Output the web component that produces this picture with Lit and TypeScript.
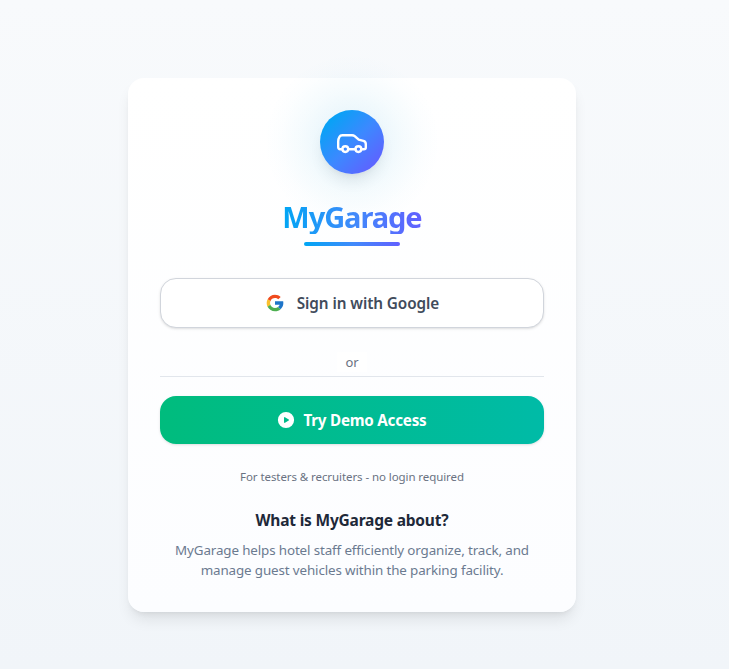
import { LitElement, html, css } from "lit";
import { customElement } from "lit/decorators.js";

@customElement("app-root")
export class AppRoot extends LitElement {
  static styles = css`
    :host {
      display: block;
      height: 669px;
      box-sizing: border-box;
      padding: 78px 0 0 128px;
      overflow: hidden;
      background: linear-gradient(to bottom, #f8fafc, #f1f5f9);
      font-family: "Noto Sans", "Open Sans", sans-serif;
      color: #1e2939;
    }
    * { box-sizing: border-box; }
    .card {
      width: 448px;
      height: 534px;
      padding: 32px;
      display: flex;
      flex-direction: column;
      align-items: center;
      border-radius: 16px;
      background: linear-gradient(to bottom, #ffffff, #fcfdff);
      box-shadow: 0 10px 15px -3px rgba(0, 0, 0, 0.09), 0 4px 6px -4px rgba(0, 0, 0, 0.1);
      text-align: center;
      white-space: nowrap;
    }
    .badge {
      position: relative;
      width: 64px;
      height: 64px;
      flex: none;
    }
    .glow {
      position: absolute;
      inset: -56px;
      border-radius: 50%;
      background: radial-gradient(circle closest-side, rgba(0, 150, 215, 0.075) 35%, rgba(0, 160, 215, 0.038) 58%, rgba(0, 166, 225, 0.011) 82%, transparent);
    }
    .disc {
      position: relative;
      width: 64px;
      height: 64px;
      display: flex;
      align-items: center;
      justify-content: center;
      border-radius: 50%;
      background: linear-gradient(135deg, #00a6f4 10%, #3d88ff 52%, #615fff 90%);
      box-shadow: 0 10px 15px -3px rgba(0, 0, 0, 0.08), 0 4px 6px -4px rgba(0, 0, 0, 0.08);
    }
    svg { display: block; flex: none; }
    .title {
      margin: 28px 0 0;
      height: 32px;
      font-size: 29px;
      line-height: 30px;
      font-weight: 700;
      letter-spacing: -1.05px;
      color: transparent;
      background: linear-gradient(to right, #00a6f4, #4189fb 52%, #615fff);
      background-clip: text;
      -webkit-background-clip: text;
    }
    .bar {
      width: 96px;
      height: 4px;
      margin-top: 8px;
      flex: none;
      border-radius: 2px;
      background: linear-gradient(to right, #00a6f4, #4189fb 52%, #615fff);
    }
    .btn {
      width: 384px;
      display: flex;
      align-items: center;
      justify-content: center;
      flex: none;
      border-radius: 16px;
      line-height: 24px;
    }
    .google {
      height: 50px;
      margin-top: 32px;
      gap: 12px;
      border: 1px solid #d1d5dc;
      background: #ffffff;
      box-shadow: 0 1px 3px rgba(0, 0, 0, 0.1), 0 1px 2px -1px rgba(0, 0, 0, 0.1);
      color: #414b5b;
      font-size: 15.3px;
      font-weight: 600;
      letter-spacing: -0.08px;
    }
    .divider {
      width: 384px;
      height: 49px;
      display: flex;
      justify-content: center;
      align-items: flex-end;
      flex: none;
      padding-bottom: 4px;
      border-bottom: 1px solid #e2e6ec;
    }
    .or {
      padding: 0 8px;
      font-size: 13px;
      line-height: 20px;
      color: #6a7282;
      background: #ffffff;
    }
    .demo {
      height: 48px;
      margin-top: 19px;
      gap: 8px;
      color: #ffffff;
      font-size: 15.2px;
      font-weight: 700;
      letter-spacing: -0.22px;
      background: linear-gradient(to right, #00bc7d, #00bba7);
      box-shadow: 0 1px 3px rgba(0, 0, 0, 0.1), 0 1px 2px -1px rgba(0, 0, 0, 0.1);
    }
    .note {
      margin: 25px 0 0;
      font-size: 11.5px;
      line-height: 16px;
      letter-spacing: -0.08px;
      color: #6a7282;
    }
    .heading {
      margin: 23px 0 0;
      font-size: 15.5px;
      line-height: 24px;
      font-weight: 700;
      letter-spacing: -0.2px;
      color: #1e2939;
    }
    .about {
      margin: 8px 0 0;
      font-size: 13.4px;
      line-height: 20px;
      letter-spacing: -0.13px;
      color: #6b7a90;
    }
    .line { display: block; }
  `;

  render() {
    return html`
      <main class="card">
        <div class="badge">
          <div class="glow"></div>
          <div class="disc">
            <svg width="32" height="32" viewBox="0 0 32 32" fill="none" stroke="#fff" stroke-width="2.4" stroke-linecap="round" stroke-linejoin="round">
              <path d="M6.2 23.2H4.2Q2.2 23.2 2.2 21.2V15.5Q2.2 12.8 3.4 10.8Q4.3 9.2 6.3 9.2H16Q17.6 9.2 18.7 10.1L22.7 13.7L27.4 14.9Q29.8 15.6 29.8 18V21.4Q29.8 23.2 27.8 23.2H25.6M12.4 23.2H19.2" />
              <circle cx="9.3" cy="23.1" r="2.9" />
              <circle cx="22.4" cy="23.1" r="2.9" />
            </svg>
          </div>
        </div>
        <h1 class="title">MyGarage</h1>
        <div class="bar"></div>
        <div class="btn google">
          <svg width="20" height="20" viewBox="0 0 48 48">
            <path fill="#f04a1d" d="M6.3 14.7l6.6 4.8C14.7 15.1 19 12 24 12c3.1 0 5.8 1.2 7.9 3.1l5.7-5.7C34 6.1 29.3 4 24 4 16.3 4 9.7 8.3 6.3 14.7z" />
            <path fill="#fbc02d" d="M6.3 14.7C4.8 17.5 4 20.6 4 24s.8 6.5 2.3 9.3l6.6-5.1A12 12 0 0 1 12.9 19.5z" />
            <path fill="#4caf50" d="M24 44c5.2 0 9.9-2 13.4-5.2l-6.2-5.2A11.9 11.9 0 0 1 24 36c-5.2 0-9.6-3.3-11.3-7.9l-6.5 5C9.5 39.6 16.2 44 24 44z" />
            <path fill="#1e75c9" d="M43.6 20H24v8h11.3a12 12 0 0 1-4.1 5.6l6.2 5.2C37 39.2 44 34 44 24c0-1.3-.1-2.7-.4-4z" />
          </svg>
          <span class="google-label">Sign in with Google</span>
        </div>
        <div class="divider"><span class="or">or</span></div>
        <div class="btn demo">
          <svg width="18" height="18" viewBox="0 0 20 20">
            <path fill="#fff" fill-rule="evenodd" d="M10 1a9 9 0 1 0 0 18a9 9 0 0 0 0-18zM8.9 6.9L13 9.4a.7.7 0 0 1 0 1.2L8.9 13.1a.7.7 0 0 1-1.1-.6V7.5a.7.7 0 0 1 1.1-.6z" />
          </svg>
          <span class="demo-label">Try Demo Access</span>
        </div>
        <p class="note">For testers &amp; recruiters - no login required</p>
        <h2 class="heading">What is MyGarage about?</h2>
        <p class="about">
          <span class="line line-one">MyGarage helps hotel staff efficiently organize, track, and</span>
          <span class="line line-two">manage guest vehicles within the parking facility.</span>
        </p>
      </main>
    `;
  }
}
